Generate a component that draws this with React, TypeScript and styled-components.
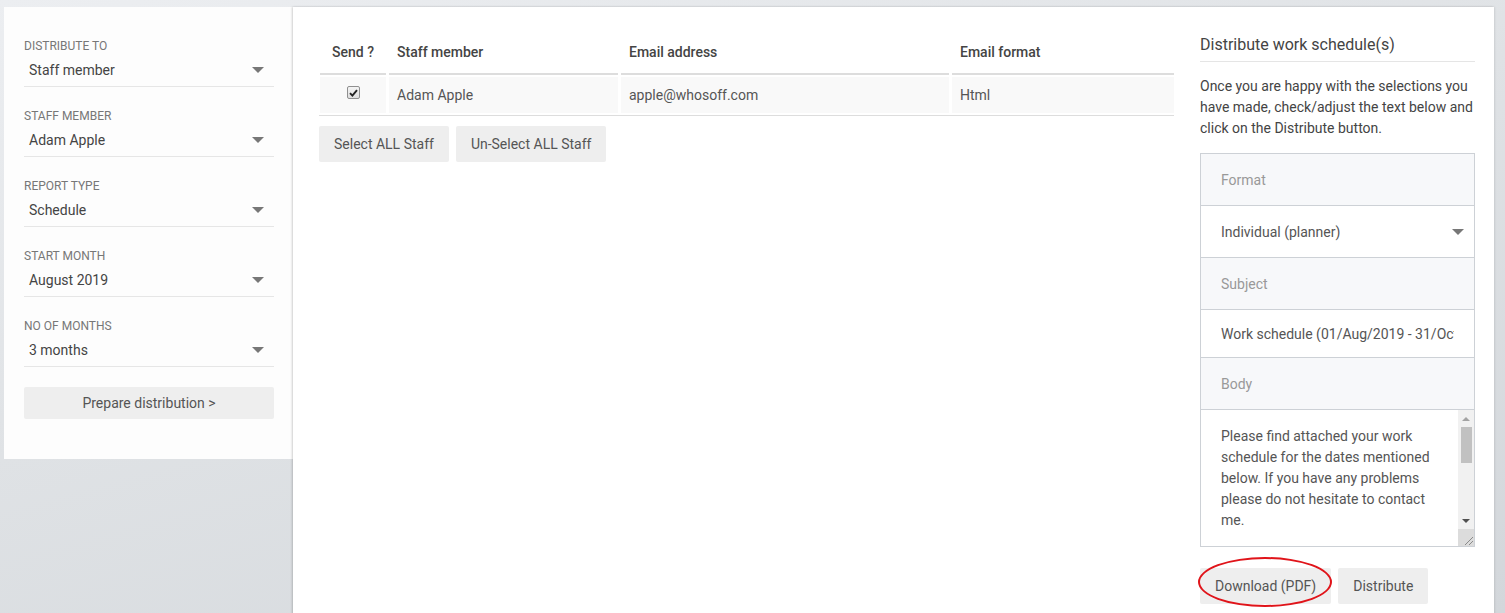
import React from "react";
import styled, { createGlobalStyle } from "styled-components";

const GlobalStyle = createGlobalStyle`
  html, body { margin: 0; padding: 0; }
  body {
    font-family: Roboto, "Liberation Sans", Arial, sans-serif;
    background: linear-gradient(165deg, #eceef1 0%, #dfe2e5 45%, #d3d7db 100%);
    min-height: 613px;
    overflow: hidden;
  }
  * { box-sizing: border-box; }
`;

const Page = styled.div`
  display: flex;
  align-items: flex-start;
  padding: 7px 0 0 4px;
  height: 613px;
  overflow: hidden;
`;

const Sidebar = styled.aside`
  width: 289px;
  flex-shrink: 0;
  padding: 31px 19px 40px 20px;
  background: #fdfdfd;
`;

const Field = styled.div`
  margin-bottom: 21px;
  &:last-of-type { margin-bottom: 20px; }
`;

const FieldLabel = styled.div`
  font-size: 12px;
  line-height: 16px;
  color: #777;
  text-transform: uppercase;
`;

const SelectBox = styled.div`
  display: flex;
  align-items: center;
  justify-content: space-between;
  height: 33px;
  border-bottom: 1px solid #e6e6e6;
  padding: 0 10px 0 5px;
  font-size: 14px;
  color: #444;
`;

const Caret = () => (
  <svg width="12" height="6" viewBox="0 0 12 6">
    <path d="M0 0 L12 0 L6 6 Z" fill="#777" />
  </svg>
);

const GreyButton = styled.button<{ $block?: boolean; $h?: number }>`
  display: ${(p) => (p.$block ? "block" : "inline-block")};
  width: ${(p) => (p.$block ? "100%" : "auto")};
  height: ${(p) => p.$h ?? 36}px;
  padding: 0 15px;
  background: #eeeeee;
  border: none;
  border-radius: 2px;
  font-family: Roboto, "Liberation Sans", Arial, sans-serif;
  font-size: 14px;
  color: #555;
  cursor: pointer;
`;

const Main = styled.main`
  width: 1201px;
  flex-shrink: 0;
  height: 640px;
  background: #fff;
  box-shadow: -1px 0 2px rgba(0, 0, 0, 0.18), 1px 0 2px rgba(0, 0, 0, 0.08);
  display: flex;
  gap: 26px;
  padding: 0 19px 0 27px;
`;

const TableArea = styled.section`
  flex: 1;
  padding-top: 21px;
`;

const TableWrap = styled.div`
  border-bottom: 1px solid #ddd;
  margin-left: -1px;
  padding-left: 1px;
`;

const Table = styled.table`
  border-collapse: separate;
  border-spacing: 3px 2px;
  margin: 0 -3px;
  width: calc(100% + 6px);
  font-size: 14px;
`;

const Th = styled.th<{ $center?: boolean; $w?: number }>`
  font-weight: 500;
  color: #444;
  text-align: ${(p) => (p.$center ? "center" : "left")};
  width: ${(p) => (p.$w ? `${p.$w}px` : "auto")};
  padding: 12px 8px 11px;
  line-height: 20px;
  border-bottom: 2px solid #ddd;
  background: #fff;
`;

const Td = styled.td<{ $center?: boolean }>`
  background: #f9f9f9;
  padding: 8px;
  line-height: 20px;
  color: #555;
  text-align: ${(p) => (p.$center ? "center" : "left")};
  vertical-align: middle;
`;

const CheckMark = styled.span`
  display: inline-flex;
  align-items: center;
  justify-content: center;
  width: 13px;
  height: 13px;
  border: 1px solid #8f8f8f;
  border-radius: 2px;
  background: linear-gradient(#f4f4f4, #dedede);
  vertical-align: middle;
  margin-top: -7px;
`;

const ButtonRow = styled.div`
  display: flex;
  gap: 7px;
  margin-top: 10px;
  margin-left: -1px;
`;

const RightCol = styled.section`
  width: 275px;
  flex-shrink: 0;
  padding-top: 27px;
`;

const Title = styled.h2`
  margin: 0;
  font-size: 16px;
  font-weight: 400;
  line-height: 22px;
  color: #444;
  padding-bottom: 5px;
  border-bottom: 1px solid #e5e5e5;
`;

const Intro = styled.p`
  margin: 14px 0 14px;
  font-size: 14px;
  line-height: 21px;
  color: #444;
`;

const FormBox = styled.div`
  border: 1px solid #cdd1d6;
`;

const FormRow = styled.div<{ $label?: boolean }>`
  display: flex;
  align-items: center;
  justify-content: space-between;
  height: 52px;
  padding: 0 10px 0 20px;
  border-bottom: 1px solid #cdd1d6;
  background: ${(p) => (p.$label ? "#f7f8fa" : "#fff")};
  color: ${(p) => (p.$label ? "#999" : "#555")};
  font-size: 14px;
`;

const SubjectInput = styled.input`
  display: block;
  width: 100%;
  height: 48px;
  border: none;
  border-bottom: 1px solid #cdd1d6;
  padding: 0 20px;
  font-family: Roboto, "Liberation Sans", Arial, sans-serif;
  font-size: 14px;
  color: #555;
  outline: none;
`;

const BodyWrap = styled.div`
  display: flex;
  height: 136px;
`;

const BodyArea = styled.textarea`
  flex: 1;
  min-width: 0;
  height: 100%;
  border: none;
  padding: 16px 20px 15px;
  font-family: Roboto, "Liberation Sans", Arial, sans-serif;
  font-size: 14px;
  line-height: 21px;
  color: #555;
  resize: none;
  outline: none;
  overflow: hidden;
`;

const ScrollBar = styled.div`
  width: 16px;
  flex-shrink: 0;
  display: flex;
  flex-direction: column;
  background: #f1f1f1;
`;

const ScrollButton = styled.div`
  height: 17px;
  display: flex;
  align-items: center;
  justify-content: center;
`;

const ScrollTrack = styled.div`
  flex: 1;
`;

const Thumb = styled.div`
  height: 36px;
  margin: 0 2px 0 3px;
  background: #c1c1c1;
`;

const Corner = styled.div`
  height: 17px;
  background: #dcdcdc;
  display: flex;
  align-items: flex-end;
  justify-content: flex-end;
`;

const ActionRow = styled.div`
  display: flex;
  gap: 7px;
  margin-top: 21px;
`;

const Highlighted = styled.div`
  position: relative;
`;

const Ellipse = styled.span`
  position: absolute;
  left: -2px;
  top: -11px;
  width: 134px;
  height: 50px;
  border: 2px solid #e0141a;
  border-radius: 50%;
  pointer-events: none;
`;

const fields = [
  { label: "Distribute to", value: "Staff member" },
  { label: "Staff member", value: "Adam Apple" },
  { label: "Report type", value: "Schedule" },
  { label: "Start month", value: "August 2019" },
  { label: "No of months", value: "3 months" },
];

const bodyText =
  "Please find attached your work schedule for the dates mentioned below. If you have any problems please do not hesitate to contact me.\n\n\n\n\n\n\n\n\n";

export default function App() {
  return (
    <>
      <GlobalStyle />
      <Page>
        <Sidebar>
          {fields.map((f) => (
            <Field key={f.label}>
              <FieldLabel>{f.label}</FieldLabel>
              <SelectBox>
                <span>{f.value}</span>
                <Caret />
              </SelectBox>
            </Field>
          ))}
          <GreyButton $block $h={32}>Prepare distribution &gt;</GreyButton>
        </Sidebar>
        <Main>
          <TableArea>
            <TableWrap>
              <Table>
                <thead>
                  <tr>
                    <Th $center $w={66}>Send ?</Th>
                    <Th $w={229}>Staff member</Th>
                    <Th $w={328}>Email address</Th>
                    <Th>Email format</Th>
                  </tr>
                </thead>
                <tbody>
                  <tr>
                    <Td $center>
                      <CheckMark role="checkbox" aria-checked="true">
                        <svg width="9" height="8" viewBox="0 0 9 8">
                          <path d="M1 4.2 L3.4 6.6 L8 1.2" stroke="#222" strokeWidth="1.9" fill="none" />
                        </svg>
                      </CheckMark>
                    </Td>
                    <Td>Adam Apple</Td>
                    <Td>apple@whosoff.com</Td>
                    <Td>Html</Td>
                  </tr>
                </tbody>
              </Table>
            </TableWrap>
            <ButtonRow>
              <GreyButton>Select ALL Staff</GreyButton>
              <GreyButton>Un-Select ALL Staff</GreyButton>
            </ButtonRow>
          </TableArea>
          <RightCol>
            <Title>Distribute work schedule(s)</Title>
            <Intro>
              Once you are happy with the selections you have made, check/adjust the text below and click on the Distribute button.
            </Intro>
            <FormBox>
              <FormRow $label>Format</FormRow>
              <FormRow>
                <span>Individual (planner)</span>
                <Caret />
              </FormRow>
              <FormRow $label>Subject</FormRow>
              <SubjectInput defaultValue="Work schedule (01/Aug/2019 - 31/Oct/2019)" />
              <FormRow $label>Body</FormRow>
              <BodyWrap>
                <BodyArea defaultValue={bodyText} />
                <ScrollBar aria-hidden="true">
                  <ScrollButton>
                    <svg width="8" height="4" viewBox="0 0 8 4">
                      <path d="M0 4 L8 4 L4 0 Z" fill="#a3a3a3" />
                    </svg>
                  </ScrollButton>
                  <ScrollTrack>
                    <Thumb />
                  </ScrollTrack>
                  <ScrollButton>
                    <svg width="8" height="4" viewBox="0 0 8 4">
                      <path d="M0 0 L8 0 L4 4 Z" fill="#505050" />
                    </svg>
                  </ScrollButton>
                  <Corner>
                    <svg width="12" height="12" viewBox="0 0 12 12">
                      <path d="M11 3 L3 11 M11 7 L7 11" stroke="#8a8a8a" strokeWidth="1" />
                    </svg>
                  </Corner>
                </ScrollBar>
              </BodyWrap>
            </FormBox>
            <ActionRow>
              <Highlighted>
                <GreyButton>Download (PDF)</GreyButton>
                <Ellipse />
              </Highlighted>
              <GreyButton>Distribute</GreyButton>
            </ActionRow>
          </RightCol>
        </Main>
      </Page>
    </>
  );
}
